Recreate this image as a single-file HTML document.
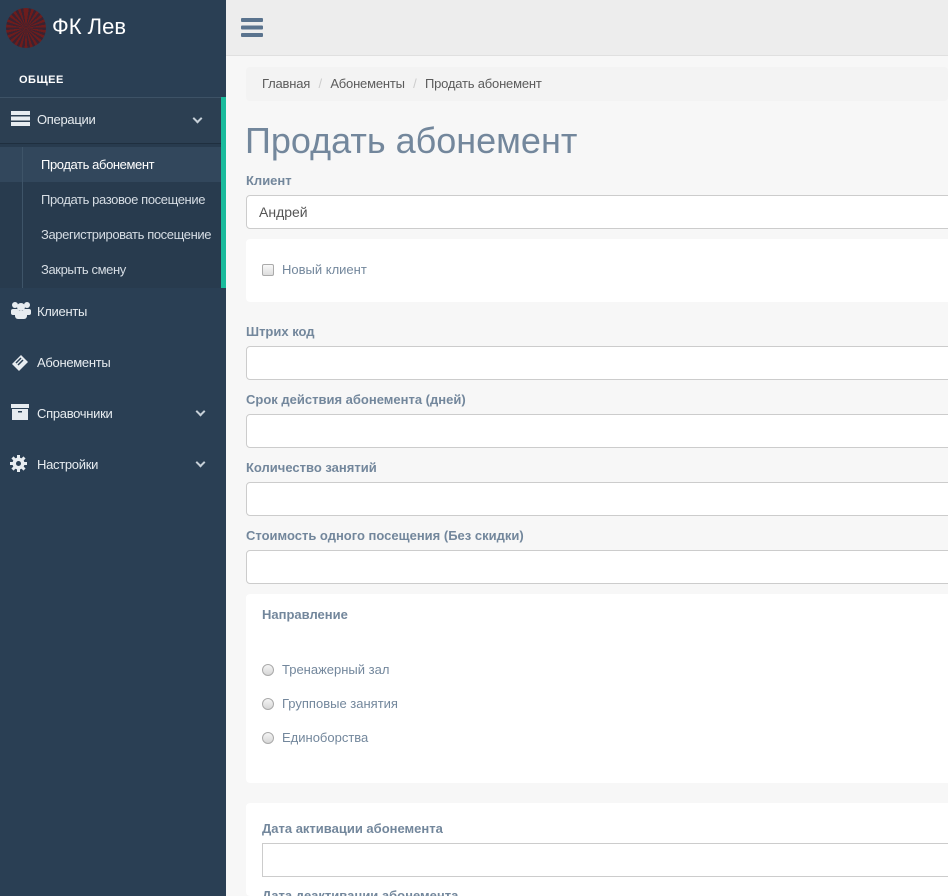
<!DOCTYPE html>
<html style="overflow:hidden;height:896px"><head><meta charset="utf-8"><style>
*{box-sizing:border-box;margin:0;padding:0}
body{width:948px;height:896px;overflow:hidden;font-family:"Liberation Sans","Noto Sans CJK SC",sans-serif;background:#f7f7f7;position:relative}
.sb{position:absolute;left:0;top:0;width:226px;height:896px;background:#2a3f54}
.abs{position:absolute;white-space:nowrap}
.logo{left:6px;top:8px;width:40px;height:40px;border-radius:50%;background:repeating-conic-gradient(#6e1c1c 0 8deg,#3b2230 8deg 16deg)}
.brand{left:52px;top:14px;color:#fff;font-size:22px}
.sub{color:#d6dde4;font-size:13px;left:41px;letter-spacing:-0.4px}
.mi{color:#e7ecf0;font-size:13px;left:37px;letter-spacing:-0.3px}
.chev{width:7px;height:7px;border-right:2px solid #c7d0d8;border-bottom:2px solid #c7d0d8;transform:rotate(45deg)}
.hdr{position:absolute;left:226px;top:0;right:0;height:56px;background:#ededed;border-bottom:1px solid #e0e0e0}
.lbl{position:absolute;left:246px;font-size:13px;font-weight:bold;color:#73879c}
.inp{position:absolute;left:246px;width:720px;height:34px;background:#fff;border:1px solid #ccc;border-radius:4px}
.card{position:absolute;left:246px;width:720px;background:#fff;border-radius:4px}
.opt{position:absolute;left:262px;font-size:13px;color:#73879c}
.rad{display:inline-block;width:12px;height:12px;border-radius:50%;border:1px solid #aaa;background:linear-gradient(#f4f4f4,#d6d6d6);vertical-align:-2px;margin-right:8px}
.cb{display:inline-block;width:12px;height:12px;border-radius:2px;border:1px solid #aaa;background:linear-gradient(#f8f8f8,#ddd);vertical-align:-2px;margin-right:8px}
</style></head><body>
<div class="sb">
<div class="abs logo"></div>
<div class="abs brand">ФК Лев</div>
<div class="abs" style="left:19px;top:74px;color:#fff;font-size:11px;font-weight:bold;letter-spacing:.5px">ОБЩЕЕ</div>
<div class="abs" style="left:0;top:97px;width:226px;height:1px;background:#3d5266"></div>
<div class="abs" style="left:0;top:98px;width:221px;height:45px;background:#2c3f52"></div>
<div class="abs" style="left:0;top:143px;width:221px;height:145px;background:#283b4e;border-top:1px solid #1f2f3f"></div>
<div class="abs" style="left:0;top:147px;width:221px;height:35px;background:#32475c"></div>
<div class="abs" style="left:221px;top:97px;width:5px;height:191px;background:#1abb9c"></div>
<div class="abs" style="left:22px;top:147px;width:1px;height:141px;background:#3e5468"></div>
<svg class="abs" style="left:11px;top:111px" width="19" height="15"><rect y="0" width="19" height="4" fill="#e7ecf0"/><rect y="5.5" width="19" height="4" fill="#e7ecf0"/><rect y="11" width="19" height="4" fill="#e7ecf0"/></svg>
<div class="abs mi" style="top:112px">Операции</div>
<div class="abs chev" style="left:194px;top:115px"></div>
<div class="abs sub" style="top:157px;color:#fff">Продать абонемент</div>
<div class="abs sub" style="top:192px">Продать разовое посещение</div>
<div class="abs sub" style="top:227px">Зарегистрировать посещение</div>
<div class="abs sub" style="top:262px">Закрыть смену</div>
<svg class="abs" style="left:10px;top:301px" width="22" height="18" fill="#e7ecf0"><circle cx="5" cy="4" r="3"/><circle cx="17" cy="4" r="3"/><circle cx="11" cy="6" r="4"/><rect x="1" y="8" width="8" height="6" rx="2"/><rect x="13" y="8" width="8" height="6" rx="2"/><rect x="5" y="10" width="12" height="8" rx="3"/></svg>
<div class="abs mi" style="top:304px">Клиенты</div>
<svg class="abs" style="left:10px;top:353px" width="20" height="18"><path d="M2 11 L11 2 L18 9 L9 18 Z" fill="#e7ecf0"/><path d="M6 10 L11 5 M8 12 L13 7" stroke="#2a3f54" stroke-width="1.5"/></svg>
<div class="abs mi" style="top:355px">Абонементы</div>
<svg class="abs" style="left:11px;top:404px" width="18" height="16" fill="#e7ecf0"><rect width="18" height="4"/><rect x="1" y="5" width="16" height="11"/><rect x="7" y="7" width="4" height="1.5" fill="#2a3f54"/></svg>
<div class="abs mi" style="top:406px">Справочники</div>
<div class="abs chev" style="left:197px;top:408px"></div>
<svg class="abs" style="left:10px;top:455px" width="17" height="17" viewBox="0 0 17 17"><g fill="#e7ecf0"><circle cx="8.5" cy="8.5" r="6"/><rect x="7" y="0" width="3" height="17"/><rect x="0" y="7" width="17" height="3"/><rect x="7" y="0" width="3" height="17" transform="rotate(45 8.5 8.5)"/><rect x="7" y="0" width="3" height="17" transform="rotate(-45 8.5 8.5)"/></g><circle cx="8.5" cy="8.5" r="2.5" fill="#2a3f54"/></svg>
<div class="abs mi" style="top:457px">Настройки</div>
<div class="abs chev" style="left:197px;top:459px"></div>
</div>
<div class="hdr"></div>
<svg class="abs" style="left:241px;top:18px" width="22" height="19" fill="#5a738e"><rect width="22" height="4" rx="1"/><rect y="7.5" width="22" height="4" rx="1"/><rect y="15" width="22" height="4" rx="1"/></svg>
<div class="abs" style="left:246px;top:67px;width:702px;height:34px;background:#f3f3f3;border-radius:4px"></div>
<div class="abs" style="left:262px;top:76px;font-size:13px;color:#5b5b5b;letter-spacing:-0.2px">Главная <span style="color:#ccc;padding:0 5px">/</span> Абонементы <span style="color:#ccc;padding:0 5px">/</span> Продать абонемент</div>
<div class="abs" style="left:245px;top:120px;font-size:36px;color:#73879c">Продать абонемент</div>
<div class="lbl" style="top:173px">Клиент</div>
<div class="inp" style="top:195px"></div>
<div class="abs" style="left:259px;top:204px;font-size:14px;color:#555">Андрей</div>
<div class="card" style="top:239px;height:63px"></div>
<div class="opt" style="top:262px"><span class="cb"></span>Новый клиент</div>
<div class="lbl" style="top:324px">Штрих код</div>
<div class="inp" style="top:346px"></div>
<div class="lbl" style="top:392px">Срок действия абонемента (дней)</div>
<div class="inp" style="top:414px"></div>
<div class="lbl" style="top:460px">Количество занятий</div>
<div class="inp" style="top:482px"></div>
<div class="lbl" style="top:528px">Стоимость одного посещения (Без скидки)</div>
<div class="inp" style="top:550px"></div>
<div class="card" style="top:594px;height:189px"></div>
<div class="lbl" style="left:262px;top:607px">Направление</div>
<div class="opt" style="top:662px"><span class="rad"></span>Тренажерный зал</div>
<div class="opt" style="top:696px"><span class="rad"></span>Групповые занятия</div>
<div class="opt" style="top:730px"><span class="rad"></span>Единоборства</div>
<div class="card" style="top:803px;height:93px"></div>
<div class="lbl" style="left:262px;top:821px">Дата активации абонемента</div>
<div class="inp" style="left:262px;top:843px;border-radius:0"></div>
<div class="lbl" style="left:262px;top:888px">Дата деактивации абонемента</div>
</body></html>
